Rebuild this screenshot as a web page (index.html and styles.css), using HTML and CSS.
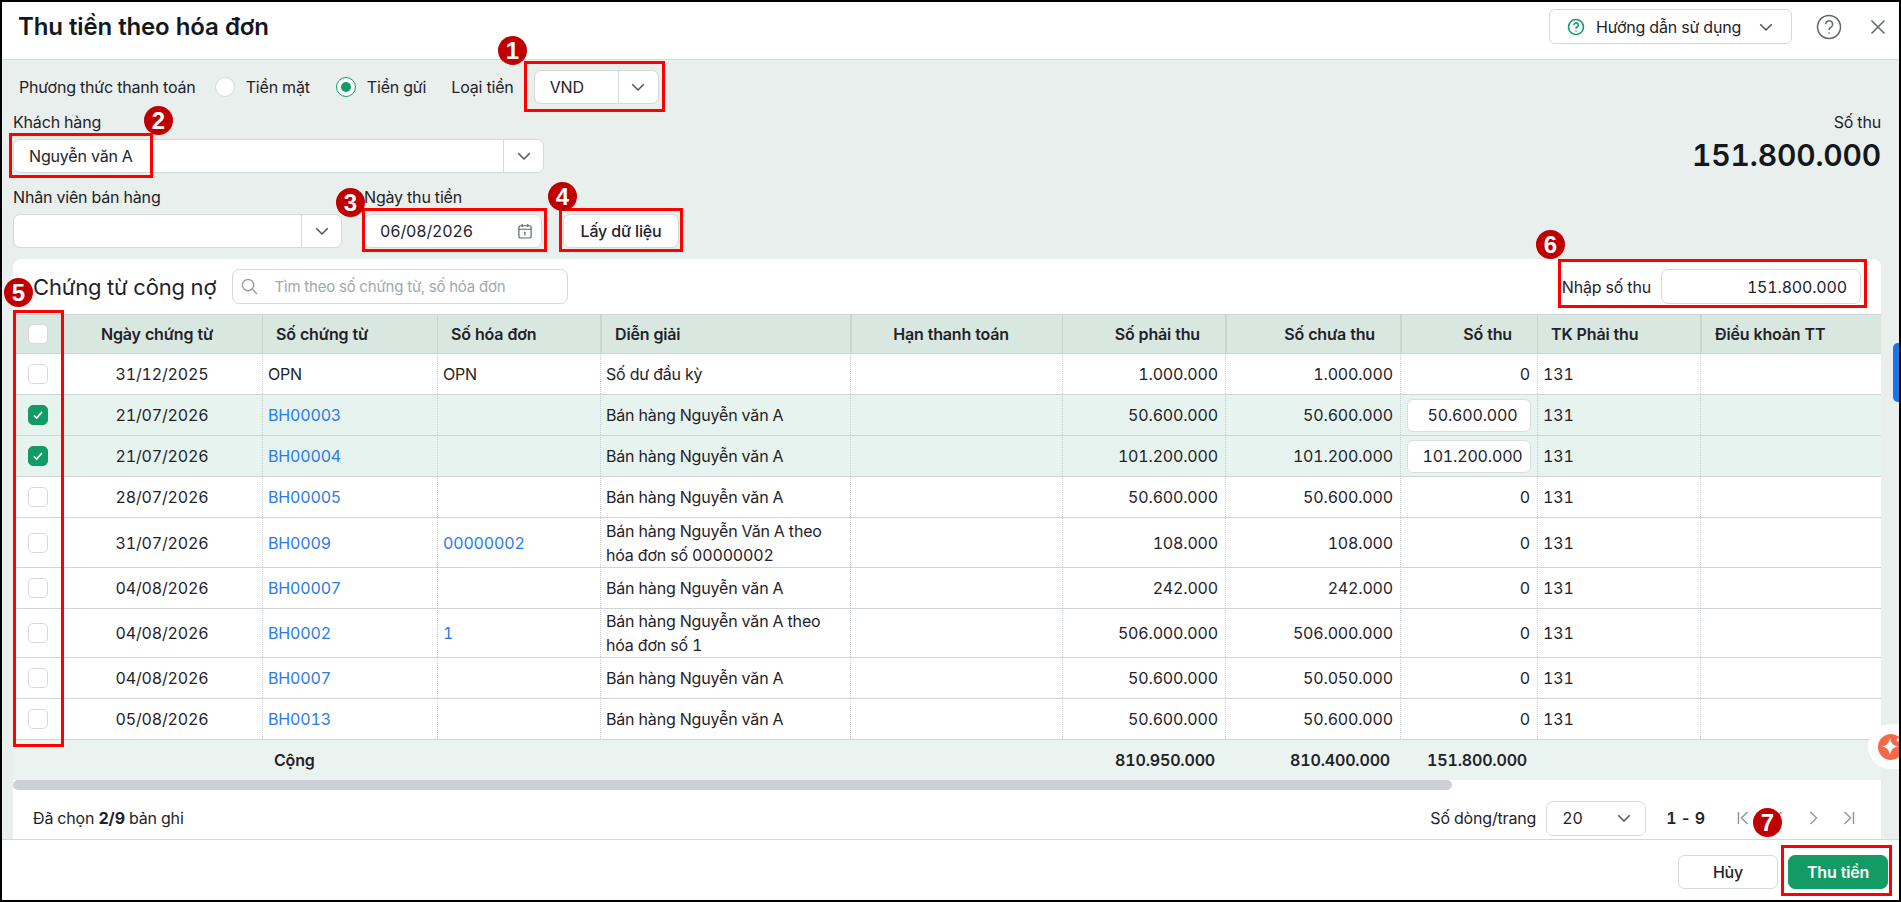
FILE: index.html
```html
<!DOCTYPE html>
<html lang="vi">
<head>
  <meta charset="UTF-8">
  <meta name="viewport" content="width=device-width, initial-scale=1.0">
  <title>Thu tiền theo hóa đơn</title>
  <link rel="stylesheet" href="styles.css">
</head>
<body>

<div class="screen">
  <div class="dialog">
    <header class="dialog-header">
      <h1 class="dialog-title">Thu tiền theo hóa đơn</h1>
      <div class="header-actions">
        <button class="guide-btn">
          <svg class="guide-icon" viewBox="0 0 18 18"><circle cx="9" cy="9" r="7.5"/><path d="M6.9 7.1a2.2 2.2 0 1 1 3.3 1.9c-.8.5-1.2.9-1.2 1.7"/><path d="M9 12.4v1"/></svg>
          Hướng dẫn sử dụng
          <svg class="chevron" viewBox="0 0 14 14"><path d="M2.5 4.8 7 9.3l4.5-4.5"/></svg>
        </button>
        <svg class="help-icon" viewBox="0 0 26 26"><circle cx="13" cy="13" r="11.5"/><path d="M9.6 10.2a3.5 3.5 0 1 1 5.4 3c-1.3.8-2 1.4-2 2.8"/><path d="M13 18.4v1.4"/></svg>
        <svg class="close-icon" viewBox="0 0 16 16"><path d="m1.5 1.5 13 13M14.5 1.5l-13 13"/></svg>
      </div>
    </header>

    <main class="dialog-body">
      <div class="pay-row">
        <span class="pay-label">Phương thức thanh toán</span>
        <label class="radio-opt"><span class="radio"></span>Tiền mặt</label>
        <label class="radio-opt"><span class="radio radio-on"></span>Tiền gửi</label>
        <span class="currency-label">Loại tiền</span>
        <div class="select-box currency-select">
          <input class="select-input" value="VND">
          <span class="select-arrow"><svg class="chevron" viewBox="0 0 14 14"><path d="M2.5 4.8 7 9.3l4.5-4.5"/></svg></span>
        </div>
      </div>

      <div class="form-area">
        <div class="form-left">
          <div class="field customer-field">
            <label class="field-label">Khách hàng</label>
            <div class="select-box">
              <input class="select-input" value="Nguyễn văn A">
              <span class="select-arrow"><svg class="chevron" viewBox="0 0 14 14"><path d="M2.5 4.8 7 9.3l4.5-4.5"/></svg></span>
            </div>
          </div>
          <div class="form-row">
            <div class="field staff-field">
              <label class="field-label">Nhân viên bán hàng</label>
              <div class="select-box">
                <input class="select-input" value="">
                <span class="select-arrow"><svg class="chevron" viewBox="0 0 14 14"><path d="M2.5 4.8 7 9.3l4.5-4.5"/></svg></span>
              </div>
            </div>
            <div class="field date-field">
              <label class="field-label">Ngày thu tiền</label>
              <div class="select-box">
                <input class="select-input" value="06/08/2026">
                <svg class="calendar-icon" viewBox="0 0 16 18"><rect x="1" y="3" width="14" height="14" rx="2"/><path d="M1 7h14M4.8 1v3.4M11.2 1v3.4M8 10.2v4M7 11l1-.8"/></svg>
              </div>
            </div>
            <button class="fetch-btn">Lấy dữ liệu</button>
          </div>
        </div>
        <div class="total-block">
          <div class="total-label">Số thu</div>
          <div class="total-value">151.800.000</div>
        </div>
      </div>

      <section class="card">
        <div class="card-head">
          <h2 class="card-title">Chứng từ công nợ</h2>
          <div class="search-box">
            <svg class="search-icon" viewBox="0 0 18 18"><circle cx="7.5" cy="7.5" r="6"/><path d="m12 12 5 5"/></svg>
            <input class="search-input" placeholder="Tìm theo số chứng từ, số hóa đơn">
          </div>
          <div class="amount-field">
            <span>Nhập số thu</span>
            <input class="amount-input" value="151.800.000">
          </div>
        </div>

        <table class="doc-table">
          <colgroup>
            <col class="col-check">
            <col class="col-date">
            <col class="col-doc">
            <col class="col-inv">
            <col class="col-desc">
            <col class="col-due">
            <col class="col-must">
            <col class="col-left">
            <col class="col-paid">
            <col class="col-acc">
            <col class="col-term">
          </colgroup>
          <thead>
            <tr>
              <th class="cell-check"><span class="checkbox"></span></th>
              <th class="t-center th-first">Ngày chứng từ</th>
              <th>Số chứng từ</th>
              <th>Số hóa đơn</th>
              <th class="th-thick">Diễn giải</th>
              <th class="t-center th-thick">Hạn thanh toán</th>
              <th class="t-right">Số phải thu</th>
              <th class="t-right th-thick">Số chưa thu</th>
              <th class="t-right th-thick">Số thu</th>
              <th>TK Phải thu</th>
              <th class="th-thick">Điều khoản TT</th>
            </tr>
          </thead>
          <tbody>
            <tr>
              <td class="cell-check"><span class="checkbox"></span></td>
              <td class="t-center td-first">31/12/2025</td>
              <td>OPN</td>
              <td>OPN</td>
              <td>Số dư đầu kỳ</td>
              <td></td>
              <td class="t-right">1.000.000</td>
              <td class="t-right">1.000.000</td>
              <td class="t-right">0</td>
              <td>131</td>
              <td></td>
            </tr>
            <tr class="row-selected">
              <td class="cell-check"><span class="checkbox checkbox-on"><svg viewBox="0 0 20 20"><path d="m5.5 10.5 3 3 6-7"/></svg></span></td>
              <td class="t-center td-first">21/07/2026</td>
              <td><a class="doc-link">BH00003</a></td>
              <td></td>
              <td>Bán hàng Nguyễn văn A</td>
              <td></td>
              <td class="t-right">50.600.000</td>
              <td class="t-right">50.600.000</td>
              <td class="cell-input"><input class="row-input" value="50.600.000"></td>
              <td>131</td>
              <td></td>
            </tr>
            <tr class="row-selected">
              <td class="cell-check"><span class="checkbox checkbox-on"><svg viewBox="0 0 20 20"><path d="m5.5 10.5 3 3 6-7"/></svg></span></td>
              <td class="t-center td-first">21/07/2026</td>
              <td><a class="doc-link">BH00004</a></td>
              <td></td>
              <td>Bán hàng Nguyễn văn A</td>
              <td></td>
              <td class="t-right">101.200.000</td>
              <td class="t-right">101.200.000</td>
              <td class="cell-input"><input class="row-input" value="101.200.000"></td>
              <td>131</td>
              <td></td>
            </tr>
            <tr>
              <td class="cell-check"><span class="checkbox"></span></td>
              <td class="t-center td-first">28/07/2026</td>
              <td><a class="doc-link">BH00005</a></td>
              <td></td>
              <td>Bán hàng Nguyễn văn A</td>
              <td></td>
              <td class="t-right">50.600.000</td>
              <td class="t-right">50.600.000</td>
              <td class="t-right">0</td>
              <td>131</td>
              <td></td>
            </tr>
            <tr class="row-tall">
              <td class="cell-check"><span class="checkbox"></span></td>
              <td class="t-center td-first">31/07/2026</td>
              <td><a class="doc-link">BH0009</a></td>
              <td><a class="doc-link">00000002</a></td>
              <td>Bán hàng Nguyễn Văn A theo<br>hóa đơn số 00000002</td>
              <td></td>
              <td class="t-right">108.000</td>
              <td class="t-right">108.000</td>
              <td class="t-right">0</td>
              <td>131</td>
              <td></td>
            </tr>
            <tr>
              <td class="cell-check"><span class="checkbox"></span></td>
              <td class="t-center td-first">04/08/2026</td>
              <td><a class="doc-link">BH00007</a></td>
              <td></td>
              <td>Bán hàng Nguyễn văn A</td>
              <td></td>
              <td class="t-right">242.000</td>
              <td class="t-right">242.000</td>
              <td class="t-right">0</td>
              <td>131</td>
              <td></td>
            </tr>
            <tr>
              <td class="cell-check"><span class="checkbox"></span></td>
              <td class="t-center td-first">04/08/2026</td>
              <td><a class="doc-link">BH0002</a></td>
              <td><a class="doc-link">1</a></td>
              <td>Bán hàng Nguyễn văn A theo<br>hóa đơn số 1</td>
              <td></td>
              <td class="t-right">506.000.000</td>
              <td class="t-right">506.000.000</td>
              <td class="t-right">0</td>
              <td>131</td>
              <td></td>
            </tr>
            <tr>
              <td class="cell-check"><span class="checkbox"></span></td>
              <td class="t-center td-first">04/08/2026</td>
              <td><a class="doc-link">BH0007</a></td>
              <td></td>
              <td>Bán hàng Nguyễn văn A</td>
              <td></td>
              <td class="t-right">50.600.000</td>
              <td class="t-right">50.050.000</td>
              <td class="t-right">0</td>
              <td>131</td>
              <td></td>
            </tr>
            <tr>
              <td class="cell-check"><span class="checkbox"></span></td>
              <td class="t-center td-first">05/08/2026</td>
              <td><a class="doc-link">BH0013</a></td>
              <td></td>
              <td>Bán hàng Nguyễn văn A</td>
              <td></td>
              <td class="t-right">50.600.000</td>
              <td class="t-right">50.600.000</td>
              <td class="t-right">0</td>
              <td>131</td>
              <td></td>
            </tr>
          </tbody>
          <tfoot>
            <tr>
              <td></td>
              <td></td>
              <td class="foot-label">Cộng</td>
              <td></td>
              <td></td>
              <td></td>
              <td class="t-right">810.950.000</td>
              <td class="t-right">810.400.000</td>
              <td class="t-right">151.800.000</td>
              <td></td>
              <td></td>
            </tr>
          </tfoot>
        </table>

        <div class="scroll-track"><div class="scroll-thumb"></div></div>

        <div class="pager">
          <div class="pager-info">Đã chọn <b>2/9</b> bản ghi</div>
          <div class="pager-controls">
            <span>Số dòng/trang</span>
            <div class="page-size">20<svg class="chevron" viewBox="0 0 14 14"><path d="M2.5 4.8 7 9.3l4.5-4.5"/></svg></div>
            <span class="page-range">1 - 9</span>
            <div class="page-nav">
              <svg viewBox="0 0 14 16"><path d="M2 2v12M11 2 5 8l6 6"/></svg>
              <svg viewBox="0 0 14 16"><path d="M10 2 4 8l6 6"/></svg>
              <svg viewBox="0 0 14 16"><path d="m4 2 6 6-6 6"/></svg>
              <svg viewBox="0 0 14 16"><path d="M12 2v12M3 2l6 6-6 6"/></svg>
            </div>
          </div>
        </div>
      </section>
    </main>

    <footer class="dialog-footer">
      <button class="btn">Hủy</button>
      <button class="btn btn-primary">Thu tiền</button>
    </footer>

    <div class="side-tab"></div>
    <div class="ai-tab">
      <span class="ai-dot"><svg viewBox="0 0 26 26"><path d="M12 4c.8 5 3 7.500 8 8.500-5 1-7.200 3.500-8 8.500-.8-5-3-7.500-8-8.500 5-1 7.200-3.500 8-8.500z"/><path d="M20 3.500c.3 1.500 1 2.200 2.500 2.500-1.500.3-2.200 1-2.500 2.500-.3-1.500-1-2.200-2.500-2.500 1.500-.3 2.200-1 2.500-2.500z"/></svg></span>
    </div>
  </div>

  <!-- annotation layer -->
  <div class="mark-box box-1"></div>
  <div class="mark-box box-2"></div>
  <div class="mark-box box-3"></div>
  <div class="mark-box box-4"></div>
  <div class="mark-box box-5"></div>
  <div class="mark-box box-6"></div>
  <div class="mark-box box-7"></div>
  <span class="badge badge-1">1</span>
  <span class="badge badge-2">2</span>
  <span class="badge badge-3">3</span>
  <span class="badge badge-4">4</span>
  <span class="badge badge-5">5</span>
  <span class="badge badge-6">6</span>
  <span class="badge badge-7">7</span>
</div>

</body>
</html>
```

FILE: styles.css
```css
* {
  box-sizing: border-box;
}

body {
  margin: 0;
  font-family: Inter, "Noto Sans", Arial, sans-serif;
  font-size: 16px;
  font-variant-numeric: tabular-nums;
  letter-spacing: -0.17px;
  color: #1f2329;
  background: #000;
}

input,
button {
  font: inherit;
  font-variant-numeric: tabular-nums;
  letter-spacing: inherit;
  color: inherit;
}

.screen {
  position: relative;
  width: 1901px;
  height: 902px;
  overflow: hidden;
}

.dialog {
  position: relative;
  display: flex;
  flex-direction: column;
  width: 1901px;
  height: 902px;
  border: 2px solid #000;
  background: #fff;
  overflow: hidden;
}

/* header */
.dialog-header {
  display: flex;
  align-items: center;
  justify-content: space-between;
  height: 58px;
  padding: 0 13px 8px 16px;
  border-bottom: 1px solid #d5d9da;
  background: #fff;
}

.dialog-title {
  margin: 0;
  font-size: 24px;
  font-weight: 600;
  color: #14181d;
}

.header-actions {
  display: flex;
  align-items: center;
}

.guide-btn {
  display: flex;
  align-items: center;
  width: 243px;
  height: 35px;
  margin-right: 24px;
  padding: 0 16px 0 17px;
  border: 1px solid #d4d9db;
  border-radius: 6px;
  background: #fff;
}

.guide-icon {
  width: 18px;
  height: 18px;
  margin-right: 11px;
  fill: none;
  stroke: #139b65;
  stroke-width: 1.6;
}

.guide-btn .chevron {
  margin-left: auto;
}

.chevron {
  flex: none;
  width: 18px;
  height: 18px;
  fill: none;
  stroke: #50565c;
  stroke-width: 1.2;
}

.help-icon {
  width: 26px;
  height: 26px;
  margin-right: 28px;
  fill: none;
  stroke: #5f666d;
  stroke-width: 1.5;
}

.close-icon {
  width: 16px;
  height: 16px;
  fill: none;
  stroke: #5f666d;
  stroke-width: 1.5;
}

/* form */
.dialog-body {
  display: flex;
  flex-direction: column;
  flex: 1;
  min-height: 0;
  background: #e9efed;
}

.pay-row {
  display: flex;
  align-items: center;
  height: 34px;
  margin-top: 10px;
  padding-left: 17px;
}

.radio-opt {
  display: flex;
  align-items: center;
  margin-left: 26px;
}

.pay-label + .radio-opt {
  margin-left: 19px;
}

.radio {
  display: flex;
  align-items: center;
  justify-content: center;
  width: 20px;
  height: 20px;
  margin-right: 11px;
  border: 1px solid #d4d9db;
  border-radius: 50%;
  background: #fff;
}

.radio-on {
  border-color: #139b65;
}

.radio-on::after {
  content: "";
  width: 10px;
  height: 10px;
  border-radius: 50%;
  background: #139b65;
}

.currency-label {
  margin-left: 25px;
}

.select-box {
  display: flex;
  align-items: center;
  height: 34px;
  border: 1px solid #d4d9db;
  border-radius: 7px;
  background: #fff;
}

.currency-select {
  width: 125px;
  margin-left: 20px;
}

.select-input {
  flex: 1;
  min-width: 0;
  height: 100%;
  padding: 0 10px 0 15px;
  border: none;
  border-radius: 7px;
  background: transparent;
  outline: none;
}

.select-arrow {
  display: flex;
  align-items: center;
  justify-content: center;
  flex: none;
  width: 40px;
  height: 100%;
  border-left: 1px solid #d4d9db;
}

.form-area {
  display: flex;
  justify-content: space-between;
  margin: 9px 18px 0 11px;
}

.form-left {
  display: flex;
  flex-direction: column;
  gap: 15px;
}

.field-label {
  display: block;
  margin-bottom: 8px;
  line-height: 18px;
}

.customer-field {
  width: 531px;
}

.form-row {
  display: flex;
  align-items: flex-end;
}

.staff-field {
  width: 329px;
  margin-right: 22px;
}

.date-field {
  width: 178px;
  margin-right: 21px;
}

.calendar-icon {
  flex: none;
  width: 14px;
  height: 16px;
  margin-right: 9px;
  fill: none;
  stroke: #5f666d;
  stroke-width: 1.4;
}

.fetch-btn {
  width: 116px;
  height: 34px;
  border: 1px solid #d4d9db;
  border-radius: 7px;
  background: #fff;
  font-weight: 500;
}

.total-block {
  text-align: right;
}

.total-label {
  margin-bottom: 6px;
  line-height: 18px;
}

.total-value {
  font-size: 30px;
  font-weight: 600;
  line-height: 36px;
  color: #14181d;
}

/* table card */
.card {
  display: flex;
  flex-direction: column;
  flex: 1;
  min-height: 0;
  margin: 11px 18px 0 11px;
  border-radius: 8px 8px 0 0;
  background: #fff;
}

.card-head {
  display: flex;
  align-items: center;
  height: 55px;
  padding: 0 20px;
}

.card-title {
  margin: 0 16px 0 0;
  font-size: 22px;
  font-weight: 400;
}

.search-box {
  position: relative;
  display: flex;
  align-items: center;
  width: 336px;
  height: 35px;
  border: 1px solid #d4d9db;
  border-radius: 7px;
}

.search-icon {
  flex: none;
  width: 17px;
  height: 17px;
  margin-left: 8px;
  fill: none;
  stroke: #9aa0a6;
  stroke-width: 1.5;
}

.search-input {
  flex: 1;
  min-width: 0;
  height: 100%;
  padding: 0 8px 0 16px;
  border: none;
  border-radius: 7px;
  background: transparent;
  font-size: 15px;
  outline: none;
}

.search-input::placeholder {
  color: #a2a8ad;
  opacity: 1;
}

.amount-field {
  display: flex;
  align-items: center;
  margin-left: auto;
}

.amount-input {
  width: 200px;
  height: 35px;
  margin-left: 10px;
  padding: 0 13px;
  border: 1px solid #d4d9db;
  border-radius: 7px;
  text-align: right;
  outline: none;
}

.doc-table {
  width: 1868px;
  border-collapse: separate;
  border-spacing: 0;
  table-layout: fixed;
}

.col-check { width: 51px; }
.col-date { width: 198px; }
.col-doc { width: 175px; }
.col-inv { width: 163px; }
.col-desc { width: 250px; }
.col-due { width: 212px; }
.col-must { width: 163px; }
.col-left { width: 175px; }
.col-paid { width: 137px; }
.col-acc { width: 163px; }
.col-term { width: 181px; }

.doc-table th {
  height: 39px;
  padding: 0 25px 0 13px;
  border-top: 1px solid #d0d6d7;
  border-left: 1px solid #ccd3d4;
  background: #d9e7e1;
  font-weight: 600;
  text-align: left;
}

.doc-table .th-thick {
  border-left-width: 2px;
}

.doc-table td {
  height: 41px;
  padding: 0 7px 0 5px;
  border-top: 1px solid #d0d4d8;
  border-left: 1px dotted #c5cacd;
  line-height: 24px;
}

.doc-table .row-tall td {
  height: 50px;
}

.doc-table .cell-check,
.doc-table .th-first,
.doc-table .td-first {
  border-left: none;
}

.doc-table .cell-check {
  padding: 0 0 0 15px;
}

.doc-table .t-center {
  text-align: center;
}

.doc-table .t-right {
  text-align: right;
}

.row-selected td {
  background: #e6f3ee;
}

.doc-link {
  color: #2b7be6;
}

.checkbox {
  display: block;
  width: 20px;
  height: 20px;
  border: 1px solid #d4d9db;
  border-radius: 5px;
  background: #fff;
}

.checkbox-on {
  border-color: #139b65;
  background: #139b65;
}

.checkbox-on svg {
  display: block;
  width: 18px;
  height: 18px;
  fill: none;
  stroke: #fff;
  stroke-width: 1.8;
}

.doc-table .cell-input {
  padding: 0 6px;
}

.row-input {
  display: block;
  width: 124px;
  height: 33px;
  padding: 0 0 0 7px;
  border: 1px solid #d9dee0;
  border-radius: 6px;
  background: #fff;
  text-align: center;
  outline: none;
}

.doc-table tfoot td {
  padding: 0 10px;
  border-left: none;
  background: #eaf3ef;
  font-weight: 600;
}

.doc-table tfoot .foot-label {
  padding-left: 12px;
}

.scroll-track {
  flex: none;
  height: 10px;
  border-radius: 0 5px 5px 0;
  background: #fff;
}

.scroll-thumb {
  width: 1439px;
  height: 10px;
  border-radius: 5px;
  background: #cdd1d5;
}

.pager {
  display: flex;
  align-items: center;
  justify-content: space-between;
  flex: 1;
  padding: 7px 15px 0 20px;
}

.pager-controls {
  display: flex;
  align-items: center;
}

.page-size {
  display: flex;
  align-items: center;
  justify-content: space-between;
  width: 100px;
  height: 35px;
  margin: 0 20px 0 10px;
  padding: 0 12px 0 15px;
  border: 1px solid #d4d9db;
  border-radius: 7px;
}

.page-range {
  margin-right: 21px;
  font-weight: 600;
}

.page-nav {
  display: flex;
}

.page-nav svg {
  width: 35px;
  height: 16px;
  fill: none;
  stroke: #8d949a;
  stroke-width: 1.4;
}

/* footer */
.dialog-footer {
  display: flex;
  justify-content: flex-end;
  gap: 10px;
  height: 61px;
  padding: 15px 11px 0 0;
  border-top: 1px solid #d5d9da;
  background: #fff;
}

.btn {
  width: 100px;
  height: 34px;
  border: 1px solid #d4d9db;
  border-radius: 7px;
  background: #fff;
  font-weight: 500;
}

.btn-primary {
  border-color: #139b65;
  background: #139b65;
  color: #fff;
  font-weight: 600;
}

/* right edge widgets */
.side-tab {
  position: absolute;
  top: 341px;
  right: 0;
  width: 6px;
  height: 59px;
  border-radius: 5px 0 0 5px;
  background: #1a73e8;
}

.ai-tab {
  position: absolute;
  top: 722px;
  right: -2px;
  display: flex;
  align-items: center;
  width: 33px;
  height: 45px;
  padding-left: 10px;
  border-radius: 23px 0 0 23px;
  background: #fff;
}

.ai-dot {
  flex: none;
  width: 26px;
  height: 26px;
  border-radius: 50%;
  background: #f4694a;
}

.ai-dot svg {
  display: block;
  fill: #fff;
}

/* annotation layer */
.mark-box {
  position: absolute;
  border: 3px solid #f00;
}

.box-1 { left: 524px; top: 61px; width: 141px; height: 51px; }
.box-2 { left: 9px; top: 133px; width: 144px; height: 45px; }
.box-3 { left: 362px; top: 208px; width: 185px; height: 44px; }
.box-4 { left: 559px; top: 208px; width: 124px; height: 44px; }
.box-5 { left: 13px; top: 310px; width: 51px; height: 437px; }
.box-6 { left: 1558px; top: 259px; width: 309px; height: 49px; }
.box-7 { left: 1781px; top: 845px; width: 111px; height: 51px; }

.badge {
  position: absolute;
  display: flex;
  align-items: center;
  justify-content: center;
  width: 29px;
  height: 29px;
  border-radius: 50%;
  background: #c00000;
  color: #fff;
  font-family: "Liberation Sans", Arial, sans-serif;
  font-size: 24px;
  font-weight: 700;
  letter-spacing: 0;
}

.badge-1 { left: 498px; top: 36px; }
.badge-2 { left: 144px; top: 106px; }
.badge-3 { left: 336px; top: 188px; }
.badge-4 { left: 548px; top: 182px; }
.badge-5 { left: 4px; top: 278px; }
.badge-6 { left: 1536px; top: 230px; }
.badge-7 { left: 1753px; top: 808px; }
```
